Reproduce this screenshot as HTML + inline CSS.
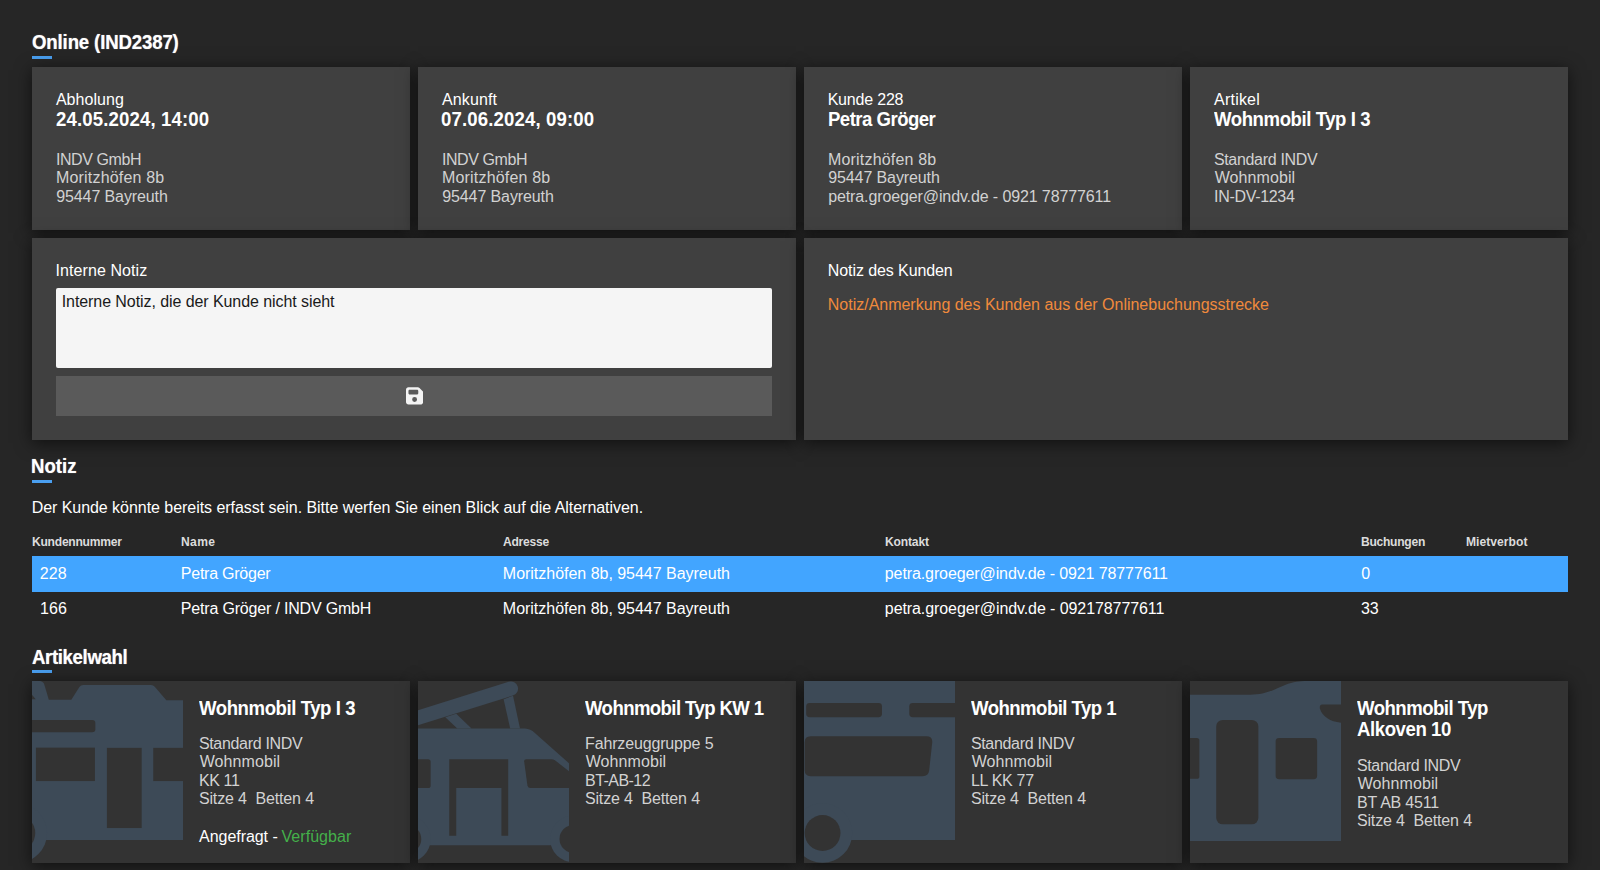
<!DOCTYPE html>
<html lang="de">
<head>
<meta charset="utf-8">
<title>Online (IND2387)</title>
<style>
html,body{margin:0;padding:0}
body{width:1600px;height:870px;overflow:hidden;position:relative;background:#262626;color:#fff;font-family:"Liberation Sans",sans-serif;font-size:16px}
.t{position:absolute;white-space:pre;line-height:1;margin:0;font-weight:400;transform-origin:0 0;display:block}
.hd{text-shadow:0 0 1px rgba(255,255,255,.65)}
.bar{position:absolute;left:32px;width:20px;height:3px;background:#4a9ff0}
.card{position:absolute;background:#404040;box-shadow:0 3px 16px rgba(0,0,0,.6)}
.card.art{background:#333333;overflow:hidden}
.ic{position:absolute;left:0;top:0}
.ta{position:absolute;left:24px;top:50px;width:716px;height:80px;background:#f5f5f5;border-radius:2px}
.btn{position:absolute;left:24px;top:138px;width:716px;height:40px;background:#5a5a5a;border:0;padding:0;margin:0}
.sv{position:absolute;left:349.8px;top:9.8px}
.row{position:absolute;left:32px;width:1536px;height:36px;background:#42a5ff}
section,header,table,thead,tbody,tr{display:block;margin:0;padding:0;border:0}
</style>
</head>
<body>
<section>
<h2 class="t hd" style="left:31.83px;top:32.00px;font-size:20px;font-weight:700;letter-spacing:-0.145px;transform:scaleX(0.93);">Online (IND2387)</h2>
<div class="bar" style="top:56px"></div>
<div class="card" style="left:32px;top:67px;width:378px;height:163px">
<div class="t" style="left:23.91px;top:25.00px;font-size:16px;letter-spacing:0.038px;">Abholung</div>
<div class="t" style="left:23.54px;top:42.00px;font-size:20px;font-weight:700;letter-spacing:0.142px;transform:scaleX(0.93);">24.05.2024, 14:00</div>
<div class="t" style="left:23.89px;top:85.00px;font-size:16px;letter-spacing:-0.416px;color:#d2d2d2;">INDV GmbH</div>
<div class="t" style="left:24.04px;top:103.00px;font-size:16px;letter-spacing:0.174px;color:#d2d2d2;">Moritzhöfen 8b</div>
<div class="t" style="left:24.24px;top:122.00px;font-size:16px;letter-spacing:-0.106px;color:#d2d2d2;">95447 Bayreuth</div>
</div>
<div class="card" style="left:418px;top:67px;width:378px;height:163px">
<div class="t" style="left:23.91px;top:25.00px;font-size:16px;letter-spacing:0.135px;">Ankunft</div>
<div class="t" style="left:23.45px;top:42.00px;font-size:20px;font-weight:700;letter-spacing:0.142px;transform:scaleX(0.93);">07.06.2024, 09:00</div>
<div class="t" style="left:23.89px;top:85.00px;font-size:16px;letter-spacing:-0.416px;color:#d2d2d2;">INDV GmbH</div>
<div class="t" style="left:24.04px;top:103.00px;font-size:16px;letter-spacing:0.174px;color:#d2d2d2;">Moritzhöfen 8b</div>
<div class="t" style="left:24.24px;top:122.00px;font-size:16px;letter-spacing:-0.106px;color:#d2d2d2;">95447 Bayreuth</div>
</div>
<div class="card" style="left:804px;top:67px;width:378px;height:163px">
<div class="t" style="left:23.64px;top:25.00px;font-size:16px;letter-spacing:-0.189px;">Kunde 228</div>
<div class="t" style="left:23.68px;top:42.00px;font-size:20px;font-weight:700;letter-spacing:-0.572px;transform:scaleX(0.93);">Petra Gröger</div>
<div class="t" style="left:24.04px;top:85.00px;font-size:16px;letter-spacing:0.174px;color:#d2d2d2;">Moritzhöfen 8b</div>
<div class="t" style="left:24.24px;top:103.00px;font-size:16px;letter-spacing:-0.106px;color:#d2d2d2;">95447 Bayreuth</div>
<div class="t" style="left:24.22px;top:122.00px;font-size:16px;letter-spacing:-0.115px;color:#d2d2d2;">petra.groeger@indv.de - 0921 78777611</div>
</div>
<div class="card" style="left:1190px;top:67px;width:378px;height:163px">
<div class="t" style="left:24.11px;top:25.00px;font-size:16px;letter-spacing:0.203px;">Artikel</div>
<div class="t" style="left:24.18px;top:42.00px;font-size:20px;font-weight:700;letter-spacing:-0.476px;transform:scaleX(0.93);">Wohnmobil Typ I 3</div>
<div class="t" style="left:23.88px;top:85.00px;font-size:16px;letter-spacing:-0.315px;color:#d2d2d2;">Standard INDV</div>
<div class="t" style="left:24.71px;top:103.00px;font-size:16px;letter-spacing:0.078px;color:#d2d2d2;">Wohnmobil</div>
<div class="t" style="left:24.09px;top:122.00px;font-size:16px;letter-spacing:-0.314px;color:#d2d2d2;">IN-DV-1234</div>
</div>
<div class="card" style="left:32px;top:238px;width:764px;height:202px">
<label class="t" style="left:23.49px;top:25.00px;font-size:16px;letter-spacing:0.082px;">Interne Notiz</label>
<div class="ta"><span class="t" style="left:5.69px;top:6.00px;font-size:16px;letter-spacing:-0.075px;color:#1a1a1a;">Interne Notiz, die der Kunde nicht sieht</span></div>
<button class="btn" type="button" aria-label="Speichern"><svg class="sv" viewBox="0 0 448 512" width="17.2" height="19.66" aria-hidden="true"><path fill="#f4f4f4" d="M64 32C28.7 32 0 60.7 0 96V416c0 35.300 28.700 64 64 64H384c35.300 0 64-28.700 64-64V173.300c0-17-6.700-33.300-18.700-45.300L352 50.700C340 38.700 323.700 32 306.700 32H64zm0 96c0-17.700 14.300-32 32-32H288c17.700 0 32 14.300 32 32v64c0 17.700-14.300 32-32 32H96c-17.700 0-32-14.300-32-32V128zM224 288a64 64 0 1 1 0 128 64 64 0 1 1 0-128z"/></svg></button>
</div>
<div class="card" style="left:804px;top:238px;width:764px;height:202px">
<div class="t" style="left:23.84px;top:25.00px;font-size:16px;letter-spacing:-0.092px;">Notiz des Kunden</div>
<div class="t" style="left:23.84px;top:59.00px;font-size:16px;letter-spacing:-0.016px;color:#f08a3c;">Notiz/Anmerkung des Kunden aus der Onlinebuchungsstrecke</div>
</div>
</section>
<section>
<h2 class="t hd" style="left:30.88px;top:456.00px;font-size:20px;font-weight:700;letter-spacing:0.033px;transform:scaleX(0.93);">Notiz</h2>
<div class="bar" style="top:480px"></div>
<p class="t" style="left:31.64px;top:500.00px;font-size:16px;letter-spacing:-0.045px;">Der Kunde könnte bereits erfasst sein. Bitte werfen Sie einen Blick auf die Alternativen.</p>
<div class="tbl">
<div class="t" style="left:31.81px;top:535.00px;font-size:13px;font-weight:700;letter-spacing:-0.271px;color:#dcdcdc;transform:scaleX(0.93);">Kundennummer</div>
<div class="t" style="left:181.01px;top:535.00px;font-size:13px;font-weight:700;letter-spacing:0.367px;color:#dcdcdc;transform:scaleX(0.93);">Name</div>
<div class="t" style="left:502.90px;top:535.00px;font-size:13px;font-weight:700;letter-spacing:-0.271px;color:#dcdcdc;transform:scaleX(0.93);">Adresse</div>
<div class="t" style="left:884.81px;top:535.00px;font-size:13px;font-weight:700;letter-spacing:-0.188px;color:#dcdcdc;transform:scaleX(0.93);">Kontakt</div>
<div class="t" style="left:1360.61px;top:535.00px;font-size:13px;font-weight:700;letter-spacing:-0.298px;color:#dcdcdc;transform:scaleX(0.93);">Buchungen</div>
<div class="t" style="left:1466.11px;top:535.00px;font-size:13px;font-weight:700;letter-spacing:0.042px;color:#dcdcdc;transform:scaleX(0.93);">Mietverbot</div>
<div class="row" style="top:556px"></div>
<div class="t" style="left:39.83px;top:566.00px;font-size:16px;letter-spacing:0.078px;">228</div>
<div class="t" style="left:180.84px;top:566.00px;font-size:16px;letter-spacing:-0.246px;">Petra Gröger</div>
<div class="t" style="left:502.84px;top:566.00px;font-size:16px;letter-spacing:-0.020px;">Moritzhöfen 8b, 95447 Bayreuth</div>
<div class="t" style="left:884.82px;top:566.00px;font-size:16px;letter-spacing:-0.105px;">petra.groeger@indv.de - 0921 78777611</div>
<div class="t" style="left:1361.14px;top:566.00px;font-size:16px;letter-spacing:-0.596px;">0</div>
<div class="t" style="left:39.91px;top:601.00px;font-size:16px;letter-spacing:0.100px;">166</div>
<div class="t" style="left:180.84px;top:601.00px;font-size:16px;letter-spacing:-0.182px;">Petra Gröger / INDV GmbH</div>
<div class="t" style="left:502.84px;top:601.00px;font-size:16px;letter-spacing:-0.020px;">Moritzhöfen 8b, 95447 Bayreuth</div>
<div class="t" style="left:884.82px;top:601.00px;font-size:16px;letter-spacing:-0.085px;">petra.groeger@indv.de - 092178777611</div>
<div class="t" style="left:1361.03px;top:601.00px;font-size:16px;letter-spacing:-0.078px;">33</div>
</div>
</section>
<section>
<h2 class="t hd" style="left:32.04px;top:647.00px;font-size:20px;font-weight:700;letter-spacing:-0.386px;transform:scaleX(0.93);">Artikelwahl</h2>
<div class="bar" style="top:670px"></div>
<div class="card art" style="left:32px;top:681px;width:378px;height:182px">
<svg class="ic" width="151" height="182" viewBox="0 0 151 182" aria-hidden="true"><g transform="scale(0.21844) translate(-45,-22)" fill="#3d4a57"><path d="M45,22 L82,22 Q97,24 102,40 L122,108 L225,108 L262,50 Q268,40 280,40 L590,40 Q600,40 607,48 L660,110 L738,110 L738,750 L45,750 Z"/>
<circle cx="-22" cy="718" r="136"/><circle cx="-22" cy="718" r="82" fill="#333333"/>
<path d="M45,85 L62,105 L45,105 Z" fill="#333333"/>
<rect x="-20" y="200" width="355" height="57" rx="14" fill="#333333"/>
<rect x="63" y="327" width="270" height="153" fill="#333333"/>
<rect x="388" y="328" width="159" height="367" fill="#333333"/>
<rect x="600" y="328" width="160" height="152" fill="#333333"/></g></svg>
<div class="t" style="left:167.18px;top:17.00px;font-size:20px;font-weight:700;letter-spacing:-0.476px;transform:scaleX(0.93);">Wohnmobil Typ I 3</div>
<div class="t" style="left:166.88px;top:55.00px;font-size:16px;letter-spacing:-0.315px;color:#d2d2d2;">Standard INDV</div>
<div class="t" style="left:167.71px;top:73.00px;font-size:16px;letter-spacing:0.078px;color:#d2d2d2;">Wohnmobil</div>
<div class="t" style="left:167.04px;top:92.00px;font-size:16px;letter-spacing:-0.410px;color:#d2d2d2;">KK 11</div>
<div class="t" style="left:166.88px;top:110.00px;font-size:16px;letter-spacing:-0.137px;color:#d2d2d2;">Sitze 4  Betten 4</div>
<div class="t" style="left:167.11px;top:148.00px;font-size:16px;letter-spacing:-0.054px;">Angefragt -</div>
<div class="t" style="left:249.47px;top:148.00px;font-size:16px;letter-spacing:0.054px;color:#44b04a;">Verfügbar</div>
</div>
<div class="card art" style="left:418px;top:681px;width:378px;height:182px">
<svg class="ic" width="151" height="182" viewBox="0 0 151 182" aria-hidden="true"><g transform="scale(0.21844) translate(-45,-22)" fill="#3d4a57"><line x1="0" y1="204" x2="470" y2="57" stroke="#3d4a57" stroke-width="66" stroke-linecap="round"/>
<path d="M170,188 L220,172 L290,240 L225,240 Z"/><path d="M437,105 L480,90 L512,240 L467,240 Z"/>
<path d="M45,240 L535,240 Q560,242 580,260 L738,400 L738,774 L45,774 Z"/>
<circle cx="-4" cy="745" r="107"/><circle cx="-4" cy="745" r="64" fill="#333333"/>
<circle cx="757" cy="745" r="107"/><circle cx="757" cy="745" r="64" fill="#333333"/>
<rect x="-20" y="380" width="123" height="132" rx="12" fill="#333333"/>
<path d="M188,380 H458 V730 H427 V512 H220 V730 H188 Z" fill="#333333"/>
<path d="M540,380 Q530,380 531,390 L546,500 Q548,512 560,512 L760,512 L760,454 L672,385 Q665,380 655,380 Z" fill="#333333"/></g></svg>
<div class="t" style="left:167.18px;top:17.00px;font-size:20px;font-weight:700;letter-spacing:-0.648px;transform:scaleX(0.93);">Wohnmobil Typ KW 1</div>
<div class="t" style="left:167.04px;top:55.00px;font-size:16px;letter-spacing:-0.150px;color:#d2d2d2;">Fahrzeuggruppe 5</div>
<div class="t" style="left:167.71px;top:73.00px;font-size:16px;letter-spacing:0.078px;color:#d2d2d2;">Wohnmobil</div>
<div class="t" style="left:167.04px;top:92.00px;font-size:16px;letter-spacing:-0.545px;color:#d2d2d2;">BT-AB-12</div>
<div class="t" style="left:166.88px;top:110.00px;font-size:16px;letter-spacing:-0.137px;color:#d2d2d2;">Sitze 4  Betten 4</div>
</div>
<div class="card art" style="left:804px;top:681px;width:378px;height:182px">
<svg class="ic" width="151" height="182" viewBox="0 0 151 182" aria-hidden="true"><g transform="scale(0.21844) translate(-45,-22)" fill="#3d4a57"><rect x="45" y="22" width="693" height="728"/>
<circle cx="130" cy="718" r="136"/><circle cx="130" cy="718" r="82" fill="#333333"/>
<rect x="55" y="123" width="347" height="65" rx="16" fill="#333333"/>
<rect x="527" y="123" width="300" height="65" rx="16" fill="#333333"/>
<path d="M75,275 H605 Q634,275 632,303 L618,432 Q615,458 588,458 H75 Q48,458 48,430 V303 Q48,275 75,275 Z" fill="#333333"/></g></svg>
<div class="t" style="left:167.18px;top:17.00px;font-size:20px;font-weight:700;letter-spacing:-0.587px;transform:scaleX(0.93);">Wohnmobil Typ 1</div>
<div class="t" style="left:166.88px;top:55.00px;font-size:16px;letter-spacing:-0.315px;color:#d2d2d2;">Standard INDV</div>
<div class="t" style="left:167.71px;top:73.00px;font-size:16px;letter-spacing:0.078px;color:#d2d2d2;">Wohnmobil</div>
<div class="t" style="left:167.04px;top:92.00px;font-size:16px;letter-spacing:-0.310px;color:#d2d2d2;">LL KK 77</div>
<div class="t" style="left:166.88px;top:110.00px;font-size:16px;letter-spacing:-0.137px;color:#d2d2d2;">Sitze 4  Betten 4</div>
</div>
<div class="card art" style="left:1190px;top:681px;width:378px;height:182px">
<svg class="ic" width="151" height="182" viewBox="0 0 151 182" aria-hidden="true"><g transform="scale(0.21844) translate(-45,-22)" fill="#3d4a57"><path d="M45,85 H320 C400,85 440,55 480,40 C520,25 545,22 580,22 H738 V755 H45 Z"/>
<rect x="-20" y="283" width="108" height="187" rx="12" fill="#333333"/>
<rect x="165" y="200" width="193" height="478" rx="30" fill="#333333"/>
<rect x="437" y="283" width="190" height="189" rx="16" fill="#333333"/>
<path d="M650,130 H760 V213 H738 Q660,205 640,150 Q636,130 650,130 Z" fill="#333333"/></g></svg>
<div class="t" style="left:167.18px;top:17.00px;font-size:20px;font-weight:700;letter-spacing:-0.573px;transform:scaleX(0.93);">Wohnmobil Typ</div>
<div class="t" style="left:166.74px;top:38.00px;font-size:20px;font-weight:700;letter-spacing:-0.464px;transform:scaleX(0.93);">Alkoven 10</div>
<div class="t" style="left:166.88px;top:77.00px;font-size:16px;letter-spacing:-0.315px;color:#d2d2d2;">Standard INDV</div>
<div class="t" style="left:167.71px;top:95.00px;font-size:16px;letter-spacing:0.078px;color:#d2d2d2;">Wohnmobil</div>
<div class="t" style="left:167.04px;top:114.00px;font-size:16px;letter-spacing:-0.200px;color:#d2d2d2;">BT AB 4511</div>
<div class="t" style="left:166.88px;top:132.00px;font-size:16px;letter-spacing:-0.137px;color:#d2d2d2;">Sitze 4  Betten 4</div>
</div>
</section>
</body>
</html>
